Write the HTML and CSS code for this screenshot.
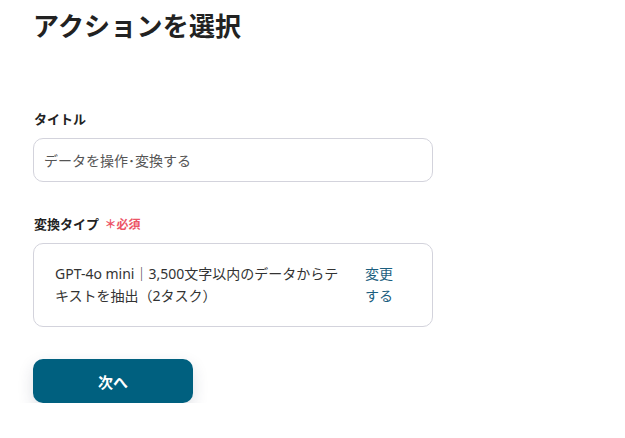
FILE: index.html
```html
<!DOCTYPE html>
<html lang="ja">
	<head>
		<meta charset="UTF-8">
		<meta name="viewport" content="width=device-width, initial-scale=1.0">
		<title>アクションを選択</title>
		<link rel="stylesheet" href="styles.css">
	</head>
	<body>
		<h1 class="page-title">アクションを選択</h1>
		<div class="field">
			<label class="field-label" for="title">タイトル</label>
			<input type="text" id="title" class="text-input" value="データを操作･変換する">
		</div>
		<div class="field">
			<div class="field-label">変換タイプ <span class="required">＊必須</span></div>
			<div class="select-box">
				<p class="select-text">GPT-4o mini｜3,500文字以内のデータからテキストを抽出（2タスク）</p>
				<a class="change-link" href="#">変更する</a>
			</div>
		</div>
		<button type="button" class="next-btn">次へ</button>
	</body>
</html>
```

FILE: styles.css
```css
body{
	margin: 0;
	padding: 0 0 0 33px;
	background: #ffffff;
	font-family: "Noto Sans", "Noto Sans CJK JP", sans-serif;
	color: #333333;
	width: 400px;
}
.page-title{
	margin: 6px 0 0 0;
	font-size: 26px;
	line-height: 40px;
	font-weight: 700;
	color: #222222;
	letter-spacing: 0.2px;
}
.field{
	display: flex;
	flex-direction: column;
}
.field:first-of-type{
	margin-top: 63px;
}
.field + .field{
	margin-top: 32px;
}
.field-label{
	font-size: 13px;
	font-weight: 700;
	line-height: 20px;
	height: 20px;
	color: #222222;
	margin: 0 0 9px 1px;
}
.required{
	color: #ec5466;
	font-size: 12px;
	font-weight: 700;
	line-height: 1;
	margin-left: 2px;
}
.text-input{
	box-sizing: border-box;
	width: 400px;
	height: 44px;
	border: 1px solid #d3d3dc;
	border-radius: 10px;
	padding: 0 10px;
	font-family: "Noto Sans", "Noto Sans CJK JP", sans-serif;
	font-size: 14px;
	color: #555555;
}
.select-box{
	box-sizing: border-box;
	width: 400px;
	min-height: 84px;
	border: 1px solid #d3d3dc;
	border-radius: 10px;
	padding: 19px 38px 19px 21px;
	display: flex;
	align-items: center;
	gap: 16px;
}
.select-text{
	margin: 0;
	width: 294px;
	flex-shrink: 0;
	font-size: 14px;
	line-height: 22px;
	color: #333333;
}
.change-link{
	width: 28px;
	flex-shrink: 0;
	font-size: 14px;
	line-height: 22px;
	color: #1c5f7f;
	text-decoration: none;
}
.next-btn{
	display: block;
	margin-top: 32px;
	width: 160px;
	height: 44px;
	border: none;
	border-radius: 10px;
	background: #00607f;
	color: #ffffff;
	font-family: "Noto Sans", "Noto Sans CJK JP", sans-serif;
	font-size: 15px;
	font-weight: 700;
	box-shadow: 0 6px 16px rgba(40, 50, 80, 0.15);
}
```
